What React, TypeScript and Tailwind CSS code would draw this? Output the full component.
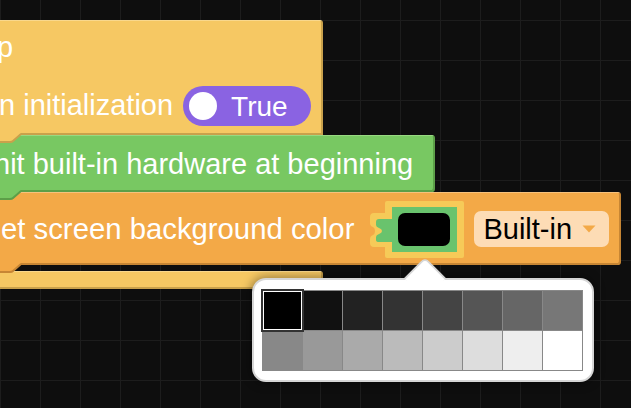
import React from 'react'

const FONT = "font-['Liberation_Sans',Arial,sans-serif]"

const SWATCHES = [
  '#000000', '#111111', '#222222', '#333333', '#444444', '#555555', '#666666', '#777777',
  '#888888', '#999999', '#aaaaaa', '#bbbbbb', '#cccccc', '#dddddd', '#eeeeee', '#ffffff',
]

// the little connector tab hanging under a block
function Tab({ fill, dark }: { fill: string; dark: string }) {
  return (
    <svg className="absolute left-0 top-[calc(100%-2px)] z-10" width="64" height="11" viewBox="0 0 64 11">
      <path d="M0 0 H61 L53 8 Q52 9 50 9 H0 Z" fill={fill} />
      <path d="M61 1 L53 8 Q52 9 50 9 H0" fill="none" stroke={dark} strokeWidth="2" />
    </svg>
  )
}

function GridBackground() {
  return (
    <svg className="absolute inset-0" width="631" height="408">
      <defs>
        <pattern id="grid" x="0" y="20" width="40" height="40" patternUnits="userSpaceOnUse">
          <path d="M0 0 H40 M0 0 V40" stroke="#1d1d1d" strokeWidth="2" fill="none" />
        </pattern>
      </defs>
      <rect width="631" height="408" fill="#0e0e0e" />
      <rect width="631" height="408" fill="url(#grid)" />
    </svg>
  )
}

function ColourField() {
  return (
    <svg width="97" height="59" viewBox="0 0 97 59" className="shrink-0">
      <rect x="17" y="1" width="79" height="57" rx="2" fill="#f6ca58" />
      <path
        d="M25 13 H6 Q2 13 2 17 V23 Q2 26 5 27 Q7 28 7 31 Q7 34 5 35 Q2 36 2 39 V43 Q2 47 6 47 H25 Z"
        fill="#f6ca58"
      />
      <rect x="24" y="7" width="65" height="45" fill="#69c36d" />
      <path
        d="M26 19 H11 Q8 19 8 22 V25 Q8 27 11 28 Q14 29 14 31 Q14 33 11 34 Q8 35 8 37 V40 Q8 42 11 42 H26 Z"
        fill="#69c36d"
      />
      <rect x="30" y="13" width="52" height="33" rx="7" fill="#000000" />
    </svg>
  )
}

function Toggle() {
  return (
    <div className="flex items-center w-[128px] h-[40px] rounded-full bg-[#8a63e2]">
      <div className="w-[28px] h-[28px] rounded-full bg-white ml-[6px]" />
      <span className="ml-[14px] pt-[2px] text-[28px] leading-[32px] text-white">True</span>
    </div>
  )
}

export default function App() {
  return (
    <div className={`relative w-[631px] h-[408px] overflow-hidden ${FONT}`}>
      <GridBackground />

      {/* block stack, runs off the left edge of the workspace */}
      <div className="absolute left-[-40px] top-[20px] flex flex-col">
        {/* setup hat */}
        <div className="relative w-[363px] h-[115px] bg-[#f6c863] border-t border-t-[#f9d88d] border-r-2 border-r-[#c9a14b] rounded-tr-[3px] shadow-[inset_0_-2px_0_#c9a14b]">
          <div className="h-[62px] pt-[10px] pl-[37px]">
            <span className="text-[29px] leading-[32px] text-white">p</span>
          </div>
          <div className="flex items-start h-[52px] pl-[39px]">
            <span className="mt-[6px] text-[29px] leading-[32px] text-white">n initialization</span>
            <div className="ml-[10px] mt-[3px]">
              <Toggle />
            </div>
          </div>
          <Tab fill="#f6c863" dark="#c9a14b" />
        </div>

        {/* init hardware */}
        <div className="relative flex items-center w-[475px] h-[57px] pl-[34px] bg-[#78c862] border-t border-t-[#98d982] border-r-2 border-r-[#5c9f48] rounded-r-[3px] shadow-[inset_0_-2px_0_#5c9f48]">
          <span className="text-[29px] leading-[32px] text-white whitespace-nowrap">nit built-in hardware at beginning</span>
          <Tab fill="#78c862" dark="#5c9f48" />
        </div>

        {/* set background colour */}
        <div className="relative flex items-center w-[661px] h-[73px] pl-[41px] bg-[#f3a947] border-t border-t-[#f7c27d] border-r-2 border-r-[#c78634] rounded-r-[3px] shadow-[inset_0_-2px_0_#c78634]">
          <span className="text-[29.3px] leading-[32px] text-white whitespace-nowrap">et screen background color</span>
          <div className="ml-[14px] mt-[1px]">
            <ColourField />
          </div>
          <div className="ml-[9px] flex items-center h-[36px] w-[135px] rounded-[7px] bg-[#fddcb5] pl-[9px]">
            <span className="text-[29px] leading-[32px] text-black">Built-in</span>
            <svg width="14" height="8" viewBox="0 0 14 8" className="ml-auto mr-[13px]">
              <path d="M0.5 0.5 H13.5 L7 7.5 Z" fill="#f3a947" />
            </svg>
          </div>
          <Tab fill="#f3a947" dark="#c78634" />
        </div>

        <div className="h-[6px]" />

        {/* bottom arm of setup */}
        <div className="w-[363px] h-[18px] bg-[#f6c863] border-t border-t-[#f9d88d] border-r-2 border-r-[#c9a14b] rounded-r-[3px] shadow-[inset_0_-2px_0_#c9a14b]" />
      </div>

      {/* colour palette dropdown */}
      <div className="absolute left-[252px] top-[278px] w-[342px] h-[104px] rounded-[14px] bg-white border-2 border-[#d6d6d6] shadow-[0_0_10px_2px_rgba(0,0,0,0.35)] pt-[10px] pl-[8px]">
        <div className="absolute left-[156px] top-[-17px] w-[30px] h-[30px] rotate-45 bg-white border-t-2 border-l-2 border-[#d6d6d6] rounded-tl-[6px]" />
        <div className="relative grid grid-cols-[repeat(8,39px)] auto-rows-[39px] gap-px p-px bg-[#888888] w-fit">
          {SWATCHES.map((c, i) => (
            <div
              key={c}
              className={i === 0 ? 'relative z-10 shadow-[inset_0_0_0_1px_#ffffff,0_0_0_2px_#333333]' : ''}
              style={{ backgroundColor: c }}
            />
          ))}
        </div>
      </div>
    </div>
  )
}
